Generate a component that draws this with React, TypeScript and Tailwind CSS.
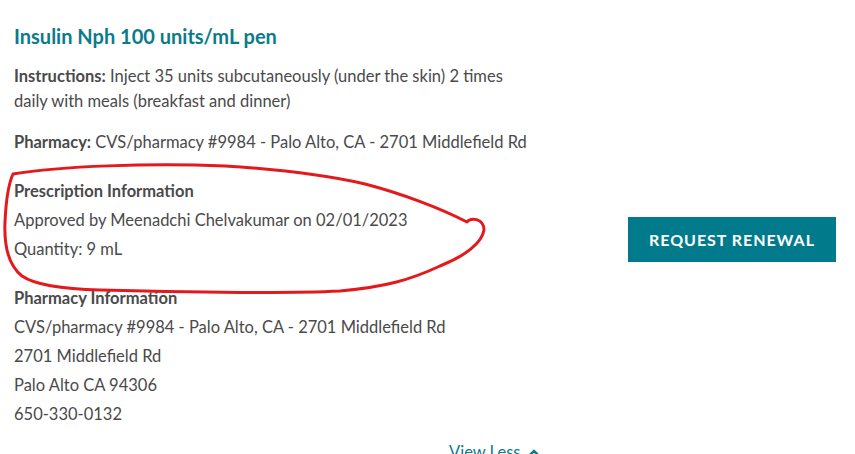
export default function App() {
  return (
    <div className="relative h-[454px] w-[855px] overflow-hidden bg-white font-['Lato',sans-serif] text-[#4a4a4a]">
      <div className="flex">
        <div className="w-[600px] pl-[14px] pt-[22px]">
          <h2 className="text-[20px] font-bold leading-[28px] text-[#0b7b8b]">Insulin Nph 100 units/mL pen</h2>

          <p className="mt-[14px] w-[525px] text-[16.5px] leading-[25px]">
            <span className="font-bold">Instructions:</span> Inject 35 units subcutaneously (under the skin) 2 times daily with meals (breakfast and dinner)
          </p>

          <p className="mt-[16px] text-[16.5px] leading-[25px]">
            <span className="font-bold">Pharmacy:</span> CVS/pharmacy #9984 - Palo Alto, CA - 2701 Middlefield Rd
          </p>

          <div className="mt-[24px] flex flex-col gap-[4px] text-[16.5px] leading-[25px]">
            <p className="font-bold">Prescription Information</p>
            <p>Approved by Meenadchi Chelvakumar on 02/01/2023</p>
            <p>Quantity: 9 mL</p>
          </div>

          <div className="mt-[24px] flex flex-col gap-[4px] text-[16.5px] leading-[25px]">
            <p className="font-bold">Pharmacy Information</p>
            <p>CVS/pharmacy #9984 - Palo Alto, CA - 2701 Middlefield Rd</p>
            <p>2701 Middlefield Rd</p>
            <p>Palo Alto CA 94306</p>
            <p>650-330-0132</p>
          </div>

          <div className="mt-[13px] flex items-center gap-[8px] pl-[435px] text-[16.5px] leading-[25px] text-[#0b7b8b]">
            <span>View Less</span>
            <svg width="12" height="8" viewBox="0 0 12 8">
              <path d="M1.5 6.5 L6 2 L10.5 6.5" fill="none" stroke="#0b7b8b" strokeWidth="2.6" />
            </svg>
          </div>
        </div>

        <div className="pl-[28px] pt-[217px]">
          <button className="flex h-[45px] w-[208px] items-center justify-center bg-[#017b8c] text-[16px] font-bold tracking-[0.06em] text-white">
            REQUEST RENEWAL
          </button>
        </div>
      </div>

      <svg className="pointer-events-none absolute inset-0" width="855" height="454" viewBox="0 0 855 454">
        <path
          d="M13 174 C 60 166, 150 163, 225 166 C 290 170, 330 176, 365 184 C 400 193, 440 208, 467 222 C 470 217, 484 218, 484 230 C 482 243, 465 256, 440 266 C 410 280, 385 287, 340 291 C 280 294, 180 292, 100 290 C 60 289, 35 285, 22 276 C 8 265, 4 245, 5 222 C 6 200, 8 185, 13 174 Z"
          fill="none"
          stroke="#e3191c"
          strokeWidth="3"
          strokeLinejoin="round"
        />
      </svg>
    </div>
  );
}
